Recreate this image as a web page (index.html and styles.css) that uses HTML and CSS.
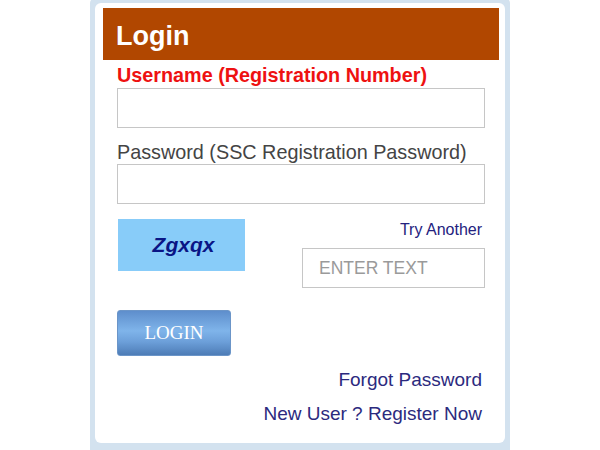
FILE: index.html
```html
<!DOCTYPE html>
<html>
<head>
<meta charset="utf-8">
<link rel="stylesheet" href="styles.css">
</head>
<body>
<div class="frame">
  <div class="panel">
    <div class="header">Login</div>
    <form class="form">
      <label class="label label-user">Username (Registration Number)</label>
      <input class="field" type="text">
      <label class="label label-pass">Password (SSC Registration Password)</label>
      <input class="field" type="password">
      <div class="captcha-row">
        <div class="captcha"><span>Zgxqx</span></div>
        <div class="captcha-side">
          <a class="try" href="#">Try Another</a>
          <input class="field captcha-field" type="text" placeholder="ENTER TEXT">
        </div>
      </div>
      <button class="btn" type="button">LOGIN</button>
      <div class="links">
        <a href="#">Forgot Password</a>
        <a href="#">New User ? Register Now</a>
      </div>
    </form>
  </div>
</div>
</body>
</html>
```
FILE: styles.css
```css
html, body {
  margin: 0;
  padding: 0;
  background: #ffffff;
  overflow: hidden;
}
body {
  font-family: "Liberation Sans", Arial, sans-serif;
}
.frame {
  width: 420px;
  box-sizing: border-box;
  margin: -2px 0 0 90px;
  padding: 5px 5px 20px 5px;
  background: #d3e2ef;
  border-radius: 5px;
}
.panel {
  background: #ffffff;
  border-radius: 6px;
  padding: 5px 6px 0 8px;
  height: 440px;
  box-sizing: border-box;
}
.header {
  box-sizing: border-box;
  height: 52px;
  padding: 14px 13px 0;
  background: #b14700;
  color: #ffffff;
  font-weight: bold;
  font-size: 27px;
  line-height: 29px;
}
.form {
  margin: 0 14px;
  display: flex;
  flex-direction: column;
}
.label {
  display: block;
  font-size: 19.8px;
  line-height: 23px;
}
.label-user {
  margin-top: 4px;
  color: #ee1111;
  font-weight: bold;
}
.label-pass {
  margin-top: 13px;
  color: #444444;
}
.field {
  box-sizing: border-box;
  display: block;
  width: 100%;
  height: 40px;
  margin: 1px 0 0;
  border: 1px solid #c6c6c6;
  background: #ffffff;
  padding: 0 16px;
  font-family: "Liberation Sans", Arial, sans-serif;
  font-size: 17.5px;
  color: #333;
  outline: none;
}
.label-pass + .field {
  margin-top: 0;
}
.captcha-row {
  display: flex;
  justify-content: space-between;
  margin-top: 15px;
}
.captcha {
  width: 127px;
  height: 52px;
  margin-left: 1px;
  background: #88ccf9;
  display: flex;
  align-items: center;
  justify-content: center;
}
.captcha span {
  color: #0a1585;
  font-weight: bold;
  font-style: italic;
  font-size: 21px;
  padding-left: 4px;
}
.captcha-side {
  width: 183px;
  display: flex;
  flex-direction: column;
  align-items: flex-end;
  padding-top: 2px;
}
.try {
  font-size: 16px;
  line-height: 18px;
  color: #23227e;
  text-decoration: none;
  margin-right: 3px;
}
.captcha-field {
  margin-top: 9px;
  width: 183px;
}
.captcha-field::placeholder {
  color: #9a9a9a;
}
.btn {
  align-self: flex-start;
  margin-top: 22px;
  width: 114px;
  height: 46px;
  border: 1px solid #6b95c8;
  border-radius: 3px;
  background: linear-gradient(to bottom, #5e8ecc 0%, #7fb4ea 45%, #6c9fd9 70%, #4d7cb6 100%);
  color: #ffffff;
  font-family: "Liberation Serif", "Times New Roman", serif;
  font-size: 19px;
  padding: 0;
  cursor: pointer;
}
.links {
  margin-top: 7px;
  display: flex;
  flex-direction: column;
  align-items: flex-end;
  padding-right: 3px;
}
.links a {
  font-size: 19px;
  line-height: 34px;
  color: #2c2a7e;
  text-decoration: none;
}
```
